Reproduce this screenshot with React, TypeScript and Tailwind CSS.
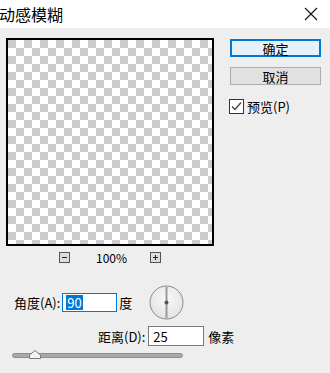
import React from 'react';

const font = { fontFamily: '"Noto Sans CJK SC", "Noto Sans", sans-serif' };

const ZoomBtn: React.FC<{ plus?: boolean }> = ({ plus }) => (
  <div className="w-[11px] h-[11px] border border-[#555] bg-[#dcdcdc] flex items-center justify-center relative">
    <div className="w-[5px] h-[1px] bg-[#222]" />
    {plus && <div className="absolute w-[1px] h-[5px] bg-[#222]" />}
  </div>
);

const Dial: React.FC = () => (
  <svg width="35" height="35" viewBox="0 0 35 35">
    <defs>
      <radialGradient id="dg" cx="50%" cy="40%" r="60%">
        <stop offset="0%" stopColor="#fafafa" />
        <stop offset="100%" stopColor="#e2e2e2" />
      </radialGradient>
    </defs>
    <circle cx="17.5" cy="17.5" r="16.5" fill="url(#dg)" stroke="#8a8a8a" strokeWidth="1" />
    <line x1="17.5" y1="2" x2="17.5" y2="33" stroke="#9a9a9a" strokeWidth="2" />
    <circle cx="17.5" cy="17.5" r="2" fill="#555" />
  </svg>
);

export default function App() {
  return (
    <div className="w-[330px] h-[373px] bg-[#eeeeee] flex flex-col overflow-hidden text-black" style={font}>
      {/* title bar */}
      <div className="h-[28px] bg-white flex items-center justify-between shrink-0">
        <span className="text-[16px] leading-none -ml-[1px]">动感模糊</span>
        <svg width="14" height="14" viewBox="0 0 14 14" className="mr-[12px]">
          <path d="M1 1 L13 13 M13 1 L1 13" stroke="#111" strokeWidth="1.1" />
        </svg>
      </div>

      {/* top */}
      <div className="flex">
        <div className="w-[214px] pl-[6px] pt-[10px] flex flex-col">
          <div className="w-[208px] h-[208px] border-2 border-black bg-[image:conic-gradient(#fff_25%,#cccccc_0_50%,#fff_0_75%,#cccccc_0)] bg-[length:16px_16px]" />
          <div className="mt-[6px] h-[11px] flex items-center">
            <div className="ml-[53px]"><ZoomBtn /></div>
            <span className="ml-[26px] text-[12px] leading-none">100%</span>
            <div className="ml-[23px]"><ZoomBtn plus /></div>
          </div>
        </div>
        <div className="pl-[16px] pt-[11px] flex flex-col">
          <div className="w-[91px] h-[18px] border-2 border-[#0078d7] bg-[#e5f1fb] flex items-center justify-center text-[13px] leading-none">确定</div>
          <div className="mt-[10px] w-[91px] h-[18px] border border-[#adadad] bg-[#e1e1e1] flex items-center justify-center text-[13px] leading-none">取消</div>
          <div className="mt-[14px] -ml-[1px] flex items-center">
            <div className="w-[15px] h-[15px] border border-[#333] bg-white flex items-center justify-center">
              <svg width="11" height="11" viewBox="0 0 11 11">
                <path d="M1 5.5 L4 8.5 L10 1.5" fill="none" stroke="#444" strokeWidth="1.3" />
              </svg>
            </div>
            <span className="ml-[3px] text-[13px] leading-none">预览(P)</span>
          </div>
        </div>
      </div>

      {/* angle */}
      <div className="mt-[22px] h-[34px] flex items-center">
        <span className="ml-[14px] text-[13px] leading-none">角度(A):</span>
        <div className="ml-[2px] w-[55px] h-[19px] border border-[#0078d7] bg-white flex items-center pl-[3px]">
          <span className="bg-[#0078d7] text-white text-[13px] leading-[15px] px-[1px]">90</span>
        </div>
        <span className="ml-[2px] text-[13px] leading-none">度</span>
        <div className="ml-[17px]"><Dial /></div>
      </div>

      {/* distance */}
      <div className="mt-[7px] h-[20px] flex items-center">
        <span className="ml-[98px] text-[13px] leading-none">距离(D):</span>
        <div className="ml-[3px] w-[56px] h-[20px] border border-[#7a7a7a] bg-white flex items-center pl-[4px] text-[13px] leading-none">25</div>
        <span className="ml-[4px] text-[13px] leading-none">像素</span>
      </div>

      {/* slider */}
      <div className="mt-[4px] ml-[12px] w-[171px] h-[9px] relative">
        <div className="absolute left-0 right-0 top-[3px] h-[5px] rounded-full bg-[#a9a9a9] border border-[#8e8e8e]" />
        <svg width="12" height="9" viewBox="0 0 12 9" className="absolute left-[17px] top-0">
          <path d="M0.5 8.5 L0.5 5 L6 0.5 L11.5 5 L11.5 8.5 Z" fill="#f2f2f2" stroke="#7a7a7a" strokeWidth="1" />
        </svg>
      </div>
    </div>
  );
}
